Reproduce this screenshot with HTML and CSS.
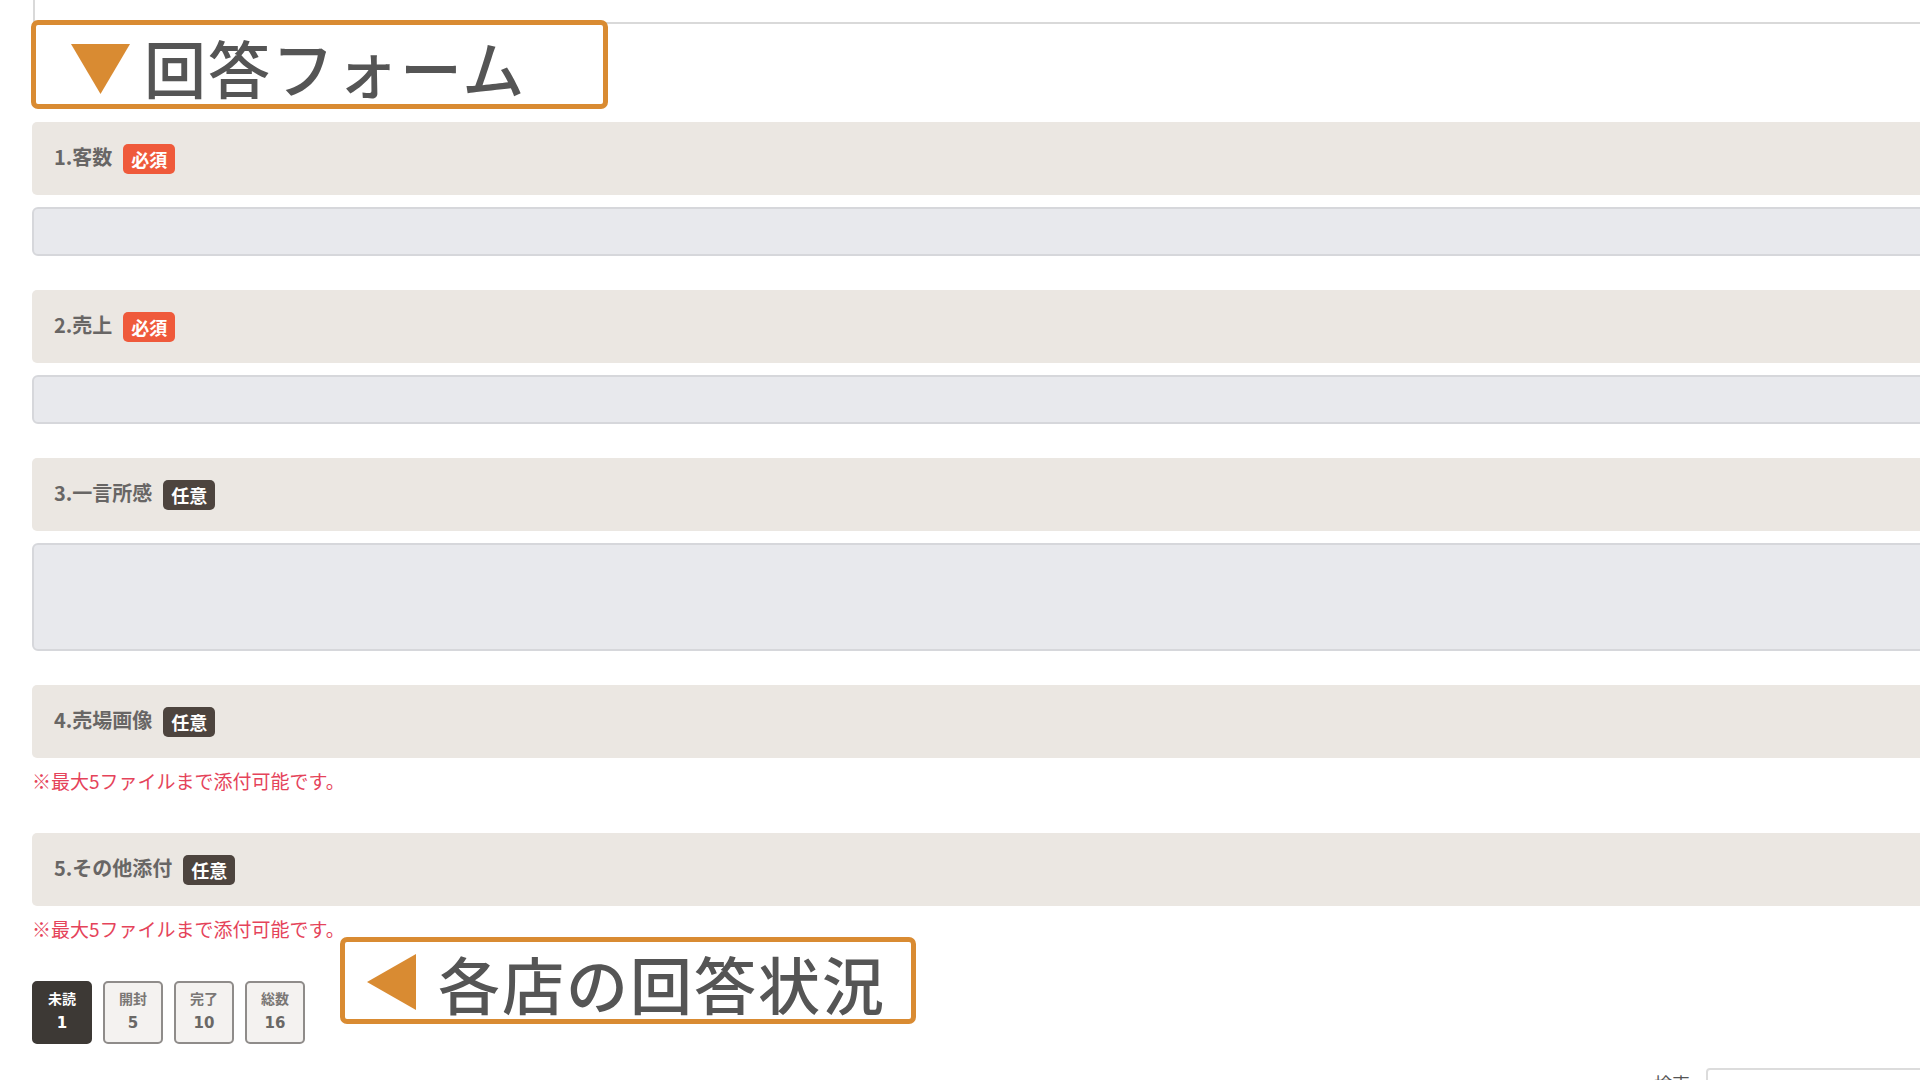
FILE: index.html
```html
<!DOCTYPE html>
<html lang="ja">
<head>
<meta charset="utf-8">
<title>回答フォーム</title>
<link rel="stylesheet" href="styles.css">
</head>
<body>
<div class="page">
  <div class="topbox"></div>

  <div class="field">
    <div class="field-head"><span class="label">1.客数</span><span class="badge req">必須</span></div>
    <div class="input"></div>
  </div>

  <div class="field">
    <div class="field-head"><span class="label">2.売上</span><span class="badge req">必須</span></div>
    <div class="input"></div>
  </div>

  <div class="field">
    <div class="field-head"><span class="label">3.一言所感</span><span class="badge opt">任意</span></div>
    <div class="input textarea"></div>
  </div>

  <div class="field field-file">
    <div class="field-head"><span class="label">4.売場画像</span><span class="badge opt">任意</span></div>
    <p class="note">※最大5ファイルまで添付可能です。</p>
  </div>

  <div class="field field-file">
    <div class="field-head"><span class="label">5.その他添付</span><span class="badge opt">任意</span></div>
    <p class="note">※最大5ファイルまで添付可能です。</p>
  </div>

  <div class="status">
    <div class="stat dark"><span class="stat-label">未読</span><span class="stat-num">1</span></div>
    <div class="stat"><span class="stat-label">開封</span><span class="stat-num">5</span></div>
    <div class="stat"><span class="stat-label">完了</span><span class="stat-num">10</span></div>
    <div class="stat"><span class="stat-label">総数</span><span class="stat-num">16</span></div>
  </div>

  <div class="search">
    <span class="search-label">検索</span>
    <div class="search-input"></div>
  </div>
</div>

<div class="callout callout-form">
  <svg class="tri-down" width="59" height="50" viewBox="0 0 59 50"><polygon points="0,0 59,0 29.5,50" fill="#d98b32"/></svg>
  <span class="callout-text">回答フォーム</span>
</div>

<div class="callout callout-status">
  <svg class="tri-left" width="49" height="56" viewBox="0 0 49 56"><polygon points="49,0 49,56 0,28" fill="#d98b32"/></svg>
  <span class="callout-text">各店の回答状況</span>
</div>
</body>
</html>
```

FILE: styles.css
```css
html, body {
  margin: 0;
  padding: 0;
  background: #ffffff;
  overflow: hidden;
  width: 1920px;
  height: 1080px;
}

body {
  position: relative;
  font-family: "Noto Sans CJK JP", "Noto Sans", sans-serif;
}

.page {
  width: 1960px;
  padding-left: 32px;
}

.topbox {
  height: 22px;
  border-left: 2px solid #d9d9d9;
  border-bottom: 2px solid #d9d9d9;
  margin-left: 1px;
  margin-bottom: 98px;
}

.field {
  margin-bottom: 34px;
}

.field-head {
  height: 73px;
  background: #ebe7e2;
  border-radius: 5px;
  display: flex;
  align-items: center;
  gap: 11px;
  padding-left: 22px;
}

.label {
  font-size: 20px;
  font-weight: 700;
  color: #686665;
  margin-top: -4px;
}

.badge {
  height: 30px;
  padding: 0 8px;
  border-radius: 5px;
  color: #ffffff;
  font-size: 18px;
  font-weight: 700;
  line-height: 30px;
}

.badge.req {
  background: #ef5a3b;
}

.badge.opt {
  background: #4d443e;
}

.input {
  margin-top: 12px;
  height: 45px;
  background: #e8e9ed;
  border: 2px solid #d6d7db;
  border-radius: 6px;
}

.input.textarea {
  height: 104px;
}

.field-file {
  margin-bottom: 39px;
}

.note {
  margin: 10px 0 0;
  font-size: 19px;
  line-height: 26px;
  color: #e5435a;
}

.status {
  display: flex;
  gap: 11px;
  margin-bottom: 24px;
}

.stat {
  width: 56px;
  height: 53px;
  border: 2px solid #8f8c8a;
  border-radius: 5px;
  background: #f4f2f0;
  display: flex;
  flex-direction: column;
  align-items: center;
  padding-top: 6px;
  box-sizing: content-box;
}

.stat.dark {
  background: #3d3935;
  border-color: #3d3935;
}

.stat-label {
  font-size: 14px;
  font-weight: 700;
  line-height: 18px;
  color: #7a7775;
}

.stat-num {
  font-family: "DejaVu Sans", "Liberation Sans", sans-serif;
  font-size: 15px;
  font-weight: 700;
  line-height: 24px;
  margin-top: 4px;
  color: #6a6866;
}

.stat.dark .stat-label,
.stat.dark .stat-num {
  color: #ffffff;
}

.search {
  display: flex;
  justify-content: flex-end;
  align-items: flex-start;
  gap: 16px;
}

.search-label {
  font-size: 18px;
  color: #555555;
  line-height: 26px;
  margin-top: 2px;
}

.search-input {
  width: 282px;
  height: 36px;
  border: 2px solid #dcdcdc;
  border-radius: 4px;
}

/* annotation overlays */
.callout {
  position: absolute;
  box-sizing: border-box;
  border: 5px solid #d98b32;
  border-radius: 7px;
  background: #ffffff;
  display: flex;
  align-items: center;
}

.callout-form {
  left: 31px;
  top: 20px;
  width: 577px;
  height: 89px;
  padding-left: 35px;
  gap: 14px;
}

.callout-form svg {
  margin-top: 8px;
}

.callout-status {
  left: 340px;
  top: 937px;
  width: 576px;
  height: 87px;
  padding-left: 22px;
  gap: 22px;
}

.callout-status svg {
  margin-top: 3px;
}

.callout svg {
  flex: none;
  display: block;
}

.callout-text {
  font-family: "Noto Sans CJK JP", sans-serif;
  font-size: 62px;
  font-weight: 500;
  letter-spacing: 2px;
  color: #555555;
  line-height: 1;
  margin-top: 4px;
}
```
